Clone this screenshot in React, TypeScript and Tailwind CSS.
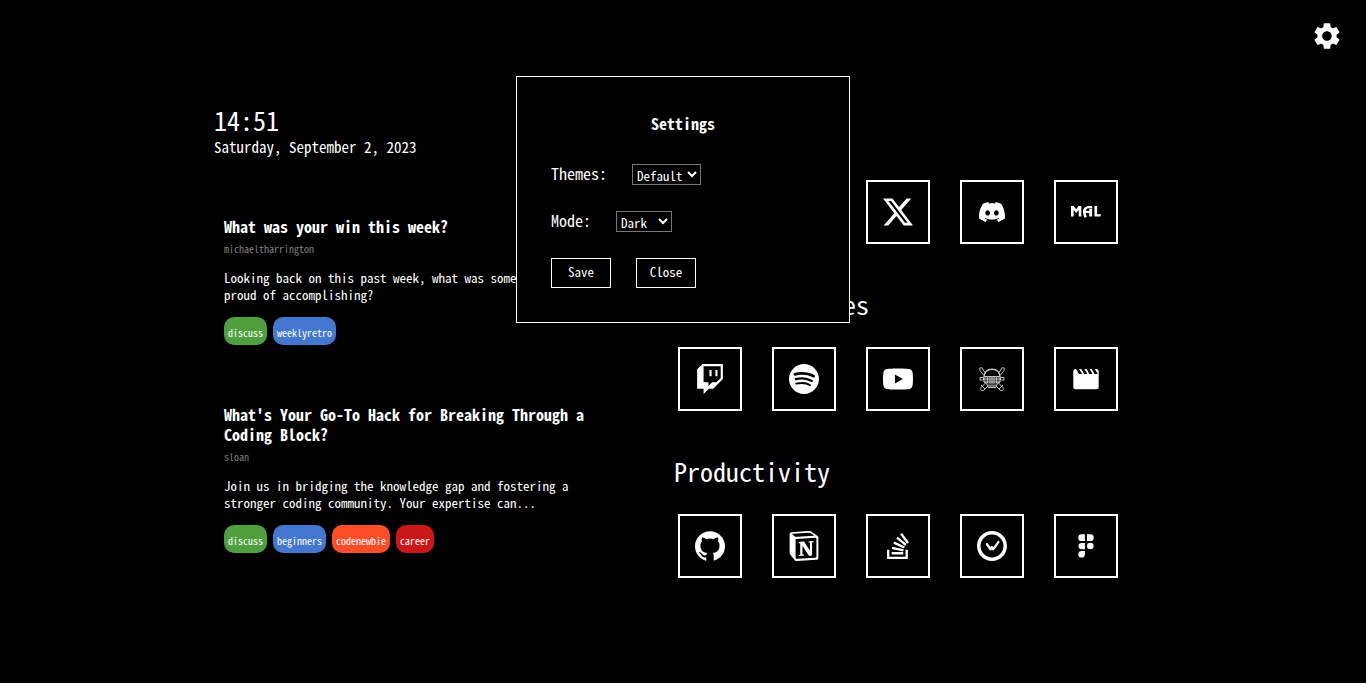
import type { ReactNode } from "react";
import { MdSettings } from "react-icons/md";
import {
  SiDiscord,
  SiGithub,
  SiGmail,
  SiMyanimelist,
  SiNotion,
  SiReddit,
  SiSpotify,
  SiStackoverflow,
  SiTwitch,
  SiWakatime,
  SiX,
  SiYoutube,
} from "react-icons/si";

type Tag = { name: string; color: string };
type Post = { title: string; author: string; text: string; tags: Tag[] };
type Shortcut = { name: string; icon: ReactNode };
type Group = { title: string; links: Shortcut[] };

const discuss: Tag = { name: "discuss", color: "bg-[#4f9f3e]" };

const posts: Post[] = [
  {
    title: "What was your win this week?",
    author: "michaeltharrington",
    text: "Looking back on this past week, what was something you're proud of accomplishing?",
    tags: [discuss, { name: "weeklyretro", color: "bg-[#4477cf]" }],
  },
  {
    title: "What's Your Go-To Hack for Breaking Through a Coding Block?",
    author: "sloan",
    text: "Join us in bridging the knowledge gap and fostering a stronger coding community. Your expertise can...",
    tags: [
      discuss,
      { name: "beginners", color: "bg-[#4477cf]" },
      { name: "codenewbie", color: "bg-[#ff4d2a]" },
      { name: "career", color: "bg-[#cb1717]" },
    ],
  },
];

function PirateSkull() {
  return (
    <svg width="30" height="30" viewBox="0 0 30 30" fill="none" stroke="#c4c4c4" strokeWidth="1" aria-hidden="true">
      <path d="M8.5 9.5 4.8 3.6 2.6 4.2 3 6.6 7 11.5M21.5 9.5l3.700-5.900 2.200.600-.400 2.400-4 4.900" />
      <path d="M7 13C7 8 10.500 5.300 15 5.300s8 2.700 8 7.700" strokeWidth="1.400" />
      <path d="M7 12.500h16v6h-2l-1.500 3.500h-9L9 18.500H7z" fill="#444" />
      <path d="M7 15h16M8 18h14M10.500 12.500V19M13 12.500v7M15 12.500v7M17 12.500v7M19.500 12.500V19" strokeWidth=".8" />
      <path d="M3 13.500h3.500v2.500H3zM23.500 13.500H27v2.500h-3.500z" />
      <path d="M8.500 19 3 24.500l2 2.500 2-1 4-4M21.500 19l5.500 5.500-2 2.500-2-1-4-4M4 21l4 4M26 21l-4 4" />
      <path d="M11 23.500h8" />
    </svg>
  );
}

function Clapper() {
  return (
    <svg width="30" height="30" viewBox="0 0 30 30" aria-hidden="true">
      <rect x="2.300" y="5" width="25.400" height="20.300" rx="2.500" fill="#fff" />
      <path
        d="M4.800 4.500h3l3.400 5.500H8zM10 4.500h3l3.400 5.500h-3.200zM15.200 4.500h3l3.400 5.500h-3.200zM20.400 4.500h3l3.400 5.500h-3.200z"
        fill="#000"
      />
    </svg>
  );
}

function Figma() {
  return (
    <svg width="30" height="30" viewBox="0 0 30 30" fill="#fff" aria-hidden="true">
      <path d="M10.700 3.200h3.200v6.900h-3.200a3.450 3.450 0 0 1 0-6.900zM16 3.200h3.300a3.450 3.450 0 0 1 0 6.900H16z" />
      <path d="M10.700 11.900h3.200v6.300h-3.200a3.150 3.150 0 0 1 0-6.300zM10.700 20h3.200v3.500a3.300 3.300 0 1 1-3.200-3.500z" />
      <circle cx="19.300" cy="15" r="3.300" />
    </svg>
  );
}

const groups: Group[] = [
  {
    title: "Social",
    links: [
      { name: "Gmail", icon: <SiGmail size={30} /> },
      { name: "Reddit", icon: <SiReddit size={30} /> },
      { name: "X", icon: <SiX size={30} /> },
      { name: "Discord", icon: <SiDiscord size={26} /> },
      { name: "MyAnimeList", icon: <SiMyanimelist size={30} /> },
    ],
  },
  {
    title: "Online Services",
    links: [
      { name: "Twitch", icon: <SiTwitch size={30} /> },
      { name: "Spotify", icon: <SiSpotify size={30} /> },
      { name: "YouTube", icon: <SiYoutube size={30} /> },
      { name: "Anime", icon: <PirateSkull /> },
      { name: "Movies", icon: <Clapper /> },
    ],
  },
  {
    title: "Productivity",
    links: [
      { name: "GitHub", icon: <SiGithub size={30} /> },
      { name: "Notion", icon: <SiNotion size={30} /> },
      { name: "Stack Overflow", icon: <SiStackoverflow size={26} /> },
      { name: "WakaTime", icon: <SiWakatime size={30} /> },
      { name: "Figma", icon: <Figma /> },
    ],
  },
];

function PostCard({ post }: { post: Post }) {
  return (
    <article>
      <h2 className="text-[16px] leading-5 font-bold">{post.title}</h2>
      <p className="mt-[6px] text-[10px] leading-[14px] text-[#808080]">{post.author}</p>
      <p className="mt-[13px] text-[13px] leading-[17px]">{post.text}</p>
      <ul className="mt-[14px] flex gap-[6px]">
        {post.tags.map((tag) => (
          <li key={tag.name} className={`${tag.color} rounded-[10px] px-1 pt-[9px] pb-[5px] text-[10px] leading-[14px]`}>
            {tag.name}
          </li>
        ))}
      </ul>
    </article>
  );
}

function SettingsDialog() {
  return (
    <section
      role="dialog"
      aria-labelledby="settings-title"
      className="absolute top-[76px] left-1/2 w-[334px] -translate-x-1/2 border border-white bg-black px-[34px] pt-[36px] pb-[34px]"
    >
      <h2 id="settings-title" className="text-center text-[16px] leading-5 font-bold">
        Settings
      </h2>
      <form onSubmit={(e) => e.preventDefault()}>
        <div className="mt-[31px] flex h-[21px] items-center gap-[25px]">
          <label htmlFor="theme" className="pb-[3px] text-[16px] leading-5">
            Themes:
          </label>
          <select id="theme" className="h-[21px] w-[69px] border border-[#767676] bg-black text-[13px] text-white">
            <option>Default</option>
          </select>
        </div>
        <div className="mt-[26px] flex h-[21px] items-center gap-[25px]">
          <label htmlFor="mode" className="pb-[3px] text-[16px] leading-5">
            Mode:
          </label>
          <select id="mode" className="h-[21px] w-[56px] border border-[#767676] bg-black text-[13px] text-white">
            <option>Dark</option>
            <option>Light</option>
          </select>
        </div>
        <div className="mt-[26px] flex gap-[25px]">
          <button type="submit" className="h-[30px] w-[60px] border border-white pb-[2px] text-[13px]">
            Save
          </button>
          <button type="button" className="h-[30px] w-[60px] border border-white pb-[2px] text-[13px]">
            Close
          </button>
        </div>
      </form>
    </section>
  );
}

export default function App() {
  return (
    <div className="relative min-h-screen bg-black px-6 font-['Noto_Sans_Mono_CJK_JP','Liberation_Mono',monospace] text-white">
      <header className="-mx-6 flex justify-end px-[23px] pt-5">
        <button type="button" aria-label="Settings">
          <MdSettings size={32} />
        </button>
      </header>
      <main className="mx-auto grid max-w-[938px] grid-cols-[386px_1fr] gap-[74px] pt-[50px]">
        <div>
          <p className="text-[26px] leading-9">14:51</p>
          <p className="text-[15px] leading-[18px]">Saturday, September 2, 2023</p>
          <div className="mt-[60px] flex flex-col gap-[59px] pl-[10px]">
            {posts.map((post) => (
              <PostCard key={post.title} post={post} />
            ))}
          </div>
        </div>
        <div className="flex flex-col gap-[42px] pt-[17px]">
          {groups.map((group) => (
            <section key={group.title}>
              <h2 className="text-[26px] leading-9">{group.title}</h2>
              <div className="mt-[25px] flex gap-[30px] pl-1">
                {group.links.map((link) => (
                  <a
                    key={link.name}
                    href="#"
                    aria-label={link.name}
                    className="flex size-16 items-center justify-center border-2 border-white"
                  >
                    {link.icon}
                  </a>
                ))}
              </div>
            </section>
          ))}
        </div>
      </main>
      <SettingsDialog />
    </div>
  );
}
